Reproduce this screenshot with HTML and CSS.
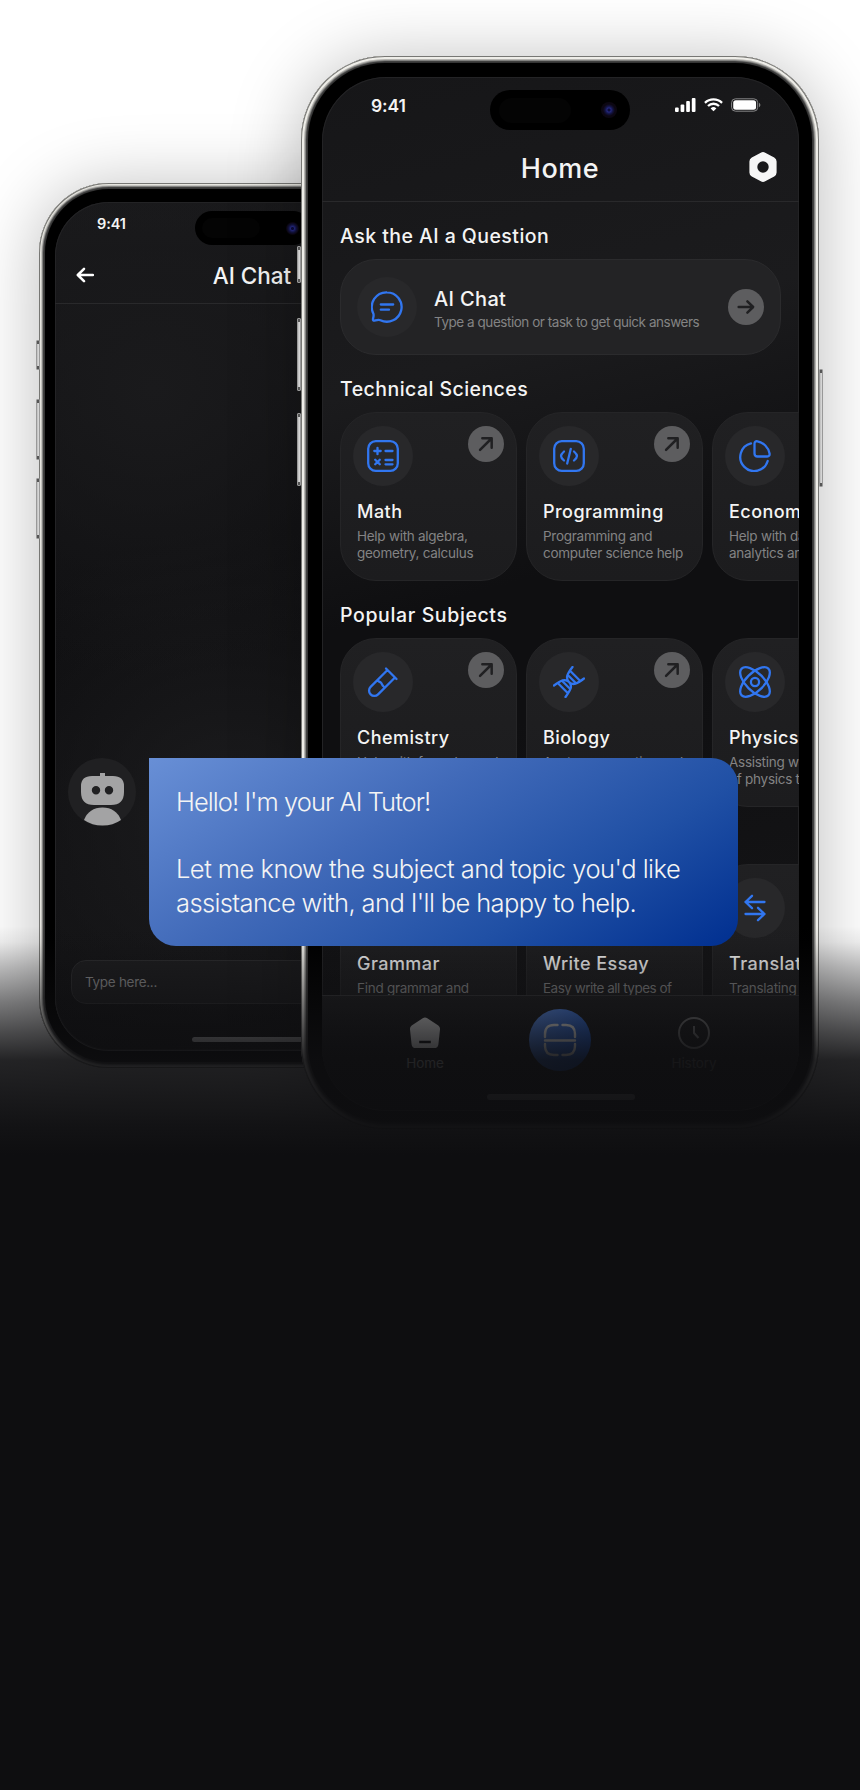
FILE: index.html
```html
<!DOCTYPE html>
<html lang="en">
<head>
<meta charset="utf-8">
<title>AI Tutor</title>
<link rel="stylesheet" href="styles.css">
</head>
<body>
<svg class="defs" width="0" height="0">
  <defs>
    <linearGradient id="pent" x1="0" y1="0" x2="0" y2="1"><stop offset="0" stop-color="#e0e0e0"/><stop offset="1" stop-color="#fff"/></linearGradient>
  </defs>
  <symbol id="i-arrow" viewBox="0 0 24 24"><path d="M4 12h15M13.500 5.800 19.800 12l-6.300 6.200"/></symbol>
  <symbol id="i-diag" viewBox="0 0 24 24"><path d="M5.500 18.500 18 6M8 5.800h10.200V16"/></symbol>
  <symbol id="i-chat" viewBox="0 0 32 32"><path d="M16 1.300a14.700 14.700 0 1 1-6.600 27.900c-1.700-.8-3-.4-5 .2-2.100.6-2.800 0-2.300-2.100.5-2 .9-3.200.2-4.900A14.700 14.700 0 0 1 16 1.300zM9.800 13.500h12.400M9.800 18.700h8.200"/></symbol>
  <symbol id="i-math" viewBox="0 0 32 32"><rect x="1.200" y="1.200" width="29.600" height="29.600" rx="7.500"/><path d="M7.300 11h6.400M10.500 7.800v6.400M18.500 11h7M8.200 19.700l4.600 4.600M12.800 19.700l-4.600 4.600M18.500 20h7M18.500 24.300h7"/></symbol>
  <symbol id="i-code" viewBox="0 0 32 32"><rect x="1.200" y="1.200" width="29.600" height="29.600" rx="7.500"/><path d="M11 11.500c-4 3.500-4 5.500 0 9M21 11.500c4 3.500 4 5.500 0 9M17.800 8.800 14.200 23.500"/></symbol>
  <symbol id="i-pie" viewBox="0 0 32 32"><path d="M12 3.400A14 14 0 1 0 28.700 21M15.500 3.700c0-2 1.200-2.700 3-2.400 6 1.200 10.800 6 12 12 .4 2-.4 3.200-2.400 3.200H18.500c-2 0-3-1-3-3z"/></symbol>
  <symbol id="i-tube" viewBox="0 0 32 32"><path d="M19 2.500 29.500 13M20.500 4 3.600 20.900a5.100 5.100 0 0 0 7.500 7.500L28 11.500M10.500 14.200c1.200 1.700 2.400 1.500 3.500 2.600s.9 2.300 2.500 3.500"/></symbol>
  <symbol id="i-dna" viewBox="0 0 32 32"><path d="M1 19.500C8 14.500 12 12 16 16s8.500 1.500 15-3.500M12.500 31C17.500 24 20 20 16 16S14.500 7.500 19.500 1M5.500 17.800l8.700 8.700M10 15.800l6.200 6.200M17.800 5.500l8.700 8.700M15.800 10l6.200 6.200"/></symbol>
  <symbol id="i-atom" viewBox="0 0 32 32"><circle cx="16" cy="16" r="4.100"/><ellipse cx="16" cy="16" rx="18.900" ry="9" transform="rotate(45 16 16)"/><ellipse cx="16" cy="16" rx="18.900" ry="9" transform="rotate(-45 16 16)"/></symbol>
  <symbol id="i-swap" viewBox="0 0 32 32"><path d="M25.500 10H6.500M13 3.800 6.500 10l6.500 6.200M6.500 22h19M19 15.800l6.500 6.200-6.500 6.200"/></symbol>
</svg>

<main class="stage">
  <section class="phone phone--back">
    <i class="key key--a"></i><i class="key key--b"></i><i class="key key--c"></i>
    <div class="bezel">
      <div class="screen">
        <header class="top">
          <div class="status"><span class="time">9:41</span></div>
          <div class="bar">
            <svg class="back-arrow" viewBox="0 0 18 16"><path d="M17 8H2M8 1.800 1.800 8 8 14.200"/></svg>
            <h1>AI Chat</h1>
          </div>
        </header>
        <div class="composer">Type here...</div>
        <div class="home-line"></div>
      </div>
      <div class="island"><i class="sensor"></i><i class="lens"></i></div>
    </div>
  </section>

  <section class="phone phone--front">
    <i class="key key--a"></i><i class="key key--b"></i><i class="key key--c"></i><i class="key key--power"></i>
    <div class="bezel">
      <div class="screen">
        <header class="top">
          <div class="status">
            <span class="time">9:41</span>
            <span class="signals">
              <svg width="21" height="14" viewBox="0 0 21 14" fill="#fff"><rect x="0" y="9.500" width="3.700" height="4.500" rx="1"/><rect x="5.600" y="6.500" width="3.700" height="7.500" rx="1"/><rect x="11.200" y="3" width="3.700" height="11" rx="1"/><rect x="16.800" y="0" width="3.700" height="14" rx="1"/></svg>
              <svg width="19" height="14" viewBox="0 0 20 14" fill="none" stroke="#fff" stroke-width="2.400"><path d="M1 4.700a13 13 0 0 1 18 0M4.200 8a8.400 8.400 0 0 1 11.600 0"/><path d="M7 10.600a4.300 4.300 0 0 1 6 0l-3 3.100z" fill="#fff" stroke="none"/></svg>
              <svg width="30" height="14" viewBox="0 0 31 14"><rect x=".6" y=".6" width="27" height="12.800" rx="4" fill="none" stroke="#8a8a8b" stroke-width="1"/><rect x="2.300" y="2.200" width="23.600" height="9.600" rx="2.600" fill="#fff"/><path d="M29 4.800c1.800.8 1.800 3.600 0 4.400z" fill="#8a8a8b"/></svg>
            </span>
          </div>
          <div class="bar">
            <h1>Home</h1>
            <svg class="nut" viewBox="0 0 28 30"><path fill="#f6f6f6" fill-rule="evenodd" d="M11.800.7a4.500 4.500 0 0 1 4.400 0l9 4.800A4.500 4.500 0 0 1 27.600 9.500v11a4.500 4.500 0 0 1-2.400 4l-9 4.800a4.500 4.500 0 0 1-4.400 0l-9-4.800a4.500 4.500 0 0 1-2.400-4v-11a4.500 4.500 0 0 1 2.400-4zM14 9.300a5.700 5.700 0 1 0 0 11.400 5.700 5.700 0 0 0 0-11.400z"/></svg>
          </div>
        </header>
        <div class="feed">
          <h2>Ask the AI a Question</h2>
          <article class="card card--wide">
            <span class="disc"><svg><use href="#i-chat"/></svg></span>
            <div class="copy"><h3>AI Chat</h3><p>Type a question or task to get quick answers</p></div>
            <span class="go"><svg><use href="#i-arrow"/></svg></span>
          </article>
          <h2>Technical Sciences</h2>
          <div class="row">
            <article class="card"><div class="head"><span class="disc"><svg><use href="#i-math"/></svg></span><span class="go"><svg><use href="#i-diag"/></svg></span></div><h3>Math</h3><p>Help with algebra,<br>geometry, calculus</p></article>
            <article class="card"><div class="head"><span class="disc"><svg><use href="#i-code"/></svg></span><span class="go"><svg><use href="#i-diag"/></svg></span></div><h3>Programming</h3><p>Programming and<br>computer science help</p></article>
            <article class="card"><div class="head"><span class="disc"><svg><use href="#i-pie"/></svg></span></div><h3>Economics</h3><p>Help with data<br>analytics and</p></article>
          </div>
          <h2 class="popular">Popular Subjects</h2>
          <div class="row">
            <article class="card"><div class="head"><span class="disc"><svg><use href="#i-tube"/></svg></span><span class="go"><svg><use href="#i-diag"/></svg></span></div><h3>Chemistry</h3><p>Help with formulas and</p></article>
            <article class="card"><div class="head"><span class="disc"><svg><use href="#i-dna"/></svg></span><span class="go"><svg><use href="#i-diag"/></svg></span></div><h3>Biology</h3><p>Anatomy, genetics and</p></article>
            <article class="card"><div class="head"><span class="disc"><svg><use href="#i-atom"/></svg></span></div><h3>Physics</h3><p>Assisting with<br>of physics tasks</p></article>
          </div>
          <h2>&nbsp;</h2>
          <div class="row">
            <article class="card"><div class="head"><span class="disc"></span></div><h3>Grammar</h3><p>Find grammar and</p></article>
            <article class="card"><div class="head"><span class="disc"></span></div><h3>Write Essay</h3><p class="essay">Easy write all types of</p></article>
            <article class="card"><div class="head"><span class="disc"><svg><use href="#i-swap"/></svg></span></div><h3>Translator</h3><p>Translating any</p></article>
          </div>
        </div>
        <nav class="tabs">
          <div class="tab-row">
            <div class="tab">
              <svg viewBox="0 0 32 32"><path fill="url(#pent)" d="M13.700 1.300a4 4 0 0 1 4.600 0l11 7.300a4 4 0 0 1 1.700 3.800l-1.600 15a4.200 4.200 0 0 1-4.200 3.700H6.800a4.200 4.200 0 0 1-4.200-3.700l-1.600-15a4 4 0 0 1 1.700-3.800z"/><path d="M10.200 25h11.600" stroke="#141416" stroke-width="2.600"/></svg>
              <span>Home</span>
            </div>
            <div class="scan"><svg viewBox="0 0 34 34"><path d="M14.500 2H11Q2 2 2 11v3M19.500 2H23q9 0 9 9v3M2 21v2q0 9 9 9h3.500M32 21v2q0 9-9 9h-3.500M2 17.500h30"/></svg></div>
            <div class="tab tab--dim">
              <svg viewBox="0 0 32 32" fill="none" stroke="#fff" stroke-width="2"><circle cx="16" cy="16" r="15"/><path d="M16 9v7l4.500 5"/></svg>
              <span>History</span>
            </div>
          </div>
          <div class="home-line"></div>
        </nav>
      </div>
      <div class="island"><i class="sensor"></i><i class="lens"></i></div>
    </div>
  </section>

  <div class="fade"></div>

  <div class="message">
    <svg class="bot" viewBox="0 0 68 68"><circle cx="34" cy="34" r="34" fill="#202022"/><path fill="#a3a3a4" fill-rule="evenodd" d="M32 15h5v3h8q11 0 11 10v6q0 13-13 13H26q-13 0-13-13v-6q0-10 11-10h8zM28 28a4.200 4.200 0 1 0 0 8.400 4.200 4.200 0 0 0 0-8.400zM41 28a4.200 4.200 0 1 0 0 8.400 4.200 4.200 0 0 0 0-8.400z"/><path fill="#a3a3a4" d="M16 62q5-12.500 18.500-12.500T53 62q-8 5.500-18.500 5.500T16 62z"/></svg>
    <div class="bubble"><p class="l1">Hello! I'm your AI Tutor!</p><p class="l2">Let me know the subject and topic you'd like</p><p class="l3">assistance with, and I'll be happy to help.</p></div>
  </div>
</main>
</body>
</html>
```
FILE: styles.css
```css
* { box-sizing: border-box; }
body { margin: 0; background: #fff; font-family: Inter, "Liberation Sans", sans-serif; color: #f4f4f4; }
h1, h2, h3, p { margin: 0; font-weight: 500; white-space: nowrap; }
svg { display: block; }
.defs { position: absolute; }
.stage { position: relative; width: 860px; height: 1790px; overflow: hidden; background: #fff; }

/* Device frames overlap freely on the stage */
.phone { position: absolute; background: #222; }
.phone--front { left: 301px; top: 56px; width: 518px; height: 1073px; border-radius: 84px; padding: 7px;
  box-shadow: inset 0 0 0 1px #777774, inset 0 0 0 3px #eeede8, inset 0 0 0 4px #b5b4b0, inset 0 0 1px 5px #8a8a88, inset 0 0 2px 7px #3c3c3c, 0 5px 70px rgba(0,0,0,.27); }
.phone--back { left: 39px; top: 183px; width: 428px; height: 885px; border-radius: 70px; padding: 6px;
  box-shadow: inset 0 0 0 1px #777774, inset 0 0 0 2px #e6e5df, inset 0 0 0 3px #c4c3bf, inset 0 0 1px 4px #8a8a88, inset 0 0 2px 6px #3c3c3c, 0 5px 70px rgba(0,0,0,.27); }
.bezel { position: relative; height: 100%; background: #000; }
.phone--front .bezel { border-radius: 77px; padding: 14px 14px 11px; }
.phone--back .bezel { border-radius: 64px; padding: 13px 11px 11px 10px; }
.screen { display: flex; flex-direction: column; height: 100%; overflow: hidden; border-bottom: 1px solid #4a4a4c; }
.phone--front .screen { width: 477px; border-radius: 64px; background: linear-gradient(165deg, #161618 0, #1b1b1d 28%, #0f0f11 48%, #0f0f11 60%, #141416 85%); box-shadow: inset 0 0 0 1px #232325; }
.phone--back .screen { border-radius: 54px; background: radial-gradient(circle at 25% 22%, #1a1a1c, transparent 40%), radial-gradient(circle at 45% 73%, #1c1c1e, transparent 45%), linear-gradient(#19191b, #111113 30%, #0e0e10 60%, #121214); box-shadow: inset 0 0 0 1px #232325; }

.key { position: absolute; width: 4px; background: linear-gradient(#555 0 3px, transparent 3px calc(100% - 3px), #555 calc(100% - 3px)), linear-gradient(90deg, #999, #f0f0f0 50%, #bbb); border: 1px solid #999; border-radius: 1px; }
.phone--front .key { left: -4px; }
.phone--front .key--a { top: 190px; height: 37px; }
.phone--front .key--b { top: 262px; height: 73px; }
.phone--front .key--c { top: 357px; height: 73px; }
.phone--front .key--power { left: auto; right: -4px; top: 313px; height: 118px; }
.phone--back .key { left: -3px; }
.phone--back .key--a { top: 157px; height: 30px; }
.phone--back .key--b { top: 216px; height: 61px; }
.phone--back .key--c { top: 295px; height: 61px; }

.island { position: absolute; background: #000; display: flex; align-items: center; justify-content: space-between; }
.phone--front .island { left: 182px; top: 27px; width: 140px; height: 40px; border-radius: 20px; padding: 0 13px 0 9px; }
.phone--back .island { left: 150px; top: 22px; width: 115px; height: 34px; border-radius: 17px; padding: 0 11px 0 7px; }
.sensor { width: 72px; height: 25px; border-radius: 13px; background: #040404; }
.phone--back .sensor { width: 58px; height: 20px; }
.lens { width: 16px; height: 16px; border-radius: 50%; background: radial-gradient(circle, #0c0c3c 0 1px, #24287e 2px, #12123e 4px, #0c0712 6px); }
.phone--back .lens { width: 13px; height: 13px; }

.top { border-bottom: 1px solid #29292b; flex: none; }
.status { display: flex; align-items: center; justify-content: space-between; }
.bar { display: flex; align-items: center; justify-content: center; position: relative; }
.phone--front .top { height: 125px; }
.phone--front .status { height: 56px; padding: 0 38px 0 49px; }
.phone--front .time { font-size: 17.500px; font-weight: 600; letter-spacing: -.1px; }
.signals { display: flex; gap: 8px; }
.phone--front .bar { height: 69px; }
.phone--front h1 { font-size: 27px; letter-spacing: .5px; padding-top: 1px; margin-right: 1px; }
.nut { position: absolute; right: 22px; top: 19px; width: 28px; height: 30px; }
.phone--back .top { height: 102px; }
.phone--back .status { height: 43px; padding-left: 42px; }
.phone--back .time { font-size: 14.500px; font-weight: 600; letter-spacing: -.1px; }
.phone--back .bar { height: 58px; padding-top: 3px; }
.phone--back h1 { font-size: 22.500px; margin-right: 1px; }
.back-arrow { position: absolute; left: 21px; top: 22px; width: 18px; height: 16px; fill: none; stroke: #fff; stroke-width: 2.500; stroke-linecap: round; stroke-linejoin: round; }

.feed { flex: 1; min-height: 0; overflow: hidden; padding: 0 0 0 18px; }
h2 { margin: 22px 0 11px; height: 24px; line-height: 24px; font-size: 19.500px; letter-spacing: .45px; }
.popular { letter-spacing: .62px; }
.row { display: flex; gap: 9px; width: 560px; }
.card { flex: none; width: 177px; height: 169px; padding: 12.500px 12px; border: 1px solid #252527; border-radius: 36px; background: linear-gradient(#202022, #1c1c1e); }
.card--wide { display: flex; align-items: center; width: 441px; height: 96px; padding: 0 16px; background: #232325; border-color: #2b2b2d; }
.head { display: flex; justify-content: space-between; }
.disc { display: flex; width: 60px; height: 60px; border-radius: 50%; background: #28282a; align-items: center; justify-content: center; }
.disc svg { width: 32px; height: 32px; overflow: visible; fill: none; stroke: #3176f0; stroke-width: 2.300; stroke-linecap: round; stroke-linejoin: round; }
.go { display: flex; width: 36px; height: 36px; border-radius: 50%; background: #5d5d5f; align-items: center; justify-content: center; }
.go svg { width: 22px; height: 22px; fill: none; stroke: #202022; stroke-width: 2.700; stroke-linecap: round; stroke-linejoin: round; }
.copy { flex: 1; padding-left: 17px; }
h3 { font-size: 18px; line-height: 24px; letter-spacing: .45px; }
.card p { font-size: 13.500px; line-height: 17px; font-weight: 400; letter-spacing: -.27px; color: #838384; }
.card .essay { letter-spacing: -.5px; }
.card > h3 { margin: 14px 0 4px; padding-left: 4px; }
.card > p { padding-left: 4px; }
.copy h3 { font-size: 20px; margin: 4px 0 3px; letter-spacing: .35px; }
.card .copy p { letter-spacing: -.46px; }

.tabs { flex: none; height: 115px; border-top: 1px solid #343436; background: linear-gradient(#1f1f21, #131315); }
.tab-row { display: flex; height: 98px; padding: 13px 60px 0 58px; justify-content: space-between; }
.tab { display: flex; flex-direction: column; align-items: center; width: 90px; padding-top: 8px; font-size: 13.500px; line-height: 18px; letter-spacing: -.1px; }
.tab svg { width: 32px; height: 32px; margin-bottom: 5px; }
.tab--dim { opacity: .4; }
.scan { display: flex; width: 62px; height: 62px; border-radius: 50%; align-items: center; justify-content: center; background: linear-gradient(135deg, #6a9bf6, #0c4dcb); }
.scan svg { width: 34px; height: 34px; fill: none; stroke: #fff; stroke-width: 2.400; stroke-linecap: round; }
.home-line { width: 148px; height: 6px; border-radius: 3px; margin: 0 auto; background: #b0b0b2; }

.composer { margin: auto 16px 33px; height: 44px; border: 1px solid #2c2c2e; border-radius: 15px; background: #1d1d1f; padding-left: 13px; font-size: 13.500px; line-height: 43px; letter-spacing: -.3px; color: #8b8b8c; flex: none; }
.phone--back .home-line { flex: none; width: 122px; height: 5px; margin: 0 auto 8px; }

.fade { position: absolute; left: 0; right: 0; top: 860px; height: 930px;
  background: linear-gradient(rgba(14,14,16,0) 0, rgba(14,14,16,0) 66px, rgba(14,14,16,.06) 82px, rgba(14,14,16,.27) 107px, rgba(14,14,16,.54) 142px, rgba(14,14,16,.74) 172px, rgba(14,14,16,.91) 200px, rgba(14,14,16,.95) 235px, rgba(14,14,16,.98) 265px, #0e0e10 295px); }

/* The greeting floats over both devices */
.message { position: absolute; left: 68px; top: 758px; display: flex; gap: 13px; }
.bot { width: 68px; height: 68px; }
.bubble { width: 589px; height: 188px; padding: 27px 27px; border-radius: 0 27px 27px 27px; background: linear-gradient(148deg, #688fd6 0, #416ab9 38%, #2050a5 70%, #002f90 100%); font-size: 25.500px; line-height: 33.500px; }
.bubble p { font-weight: 300; height: 33.500px; }
.bubble .l1 { margin-bottom: 33.500px; letter-spacing: -.95px; }
.bubble .l2 { letter-spacing: -.52px; }
.bubble .l3 { letter-spacing: -.62px; }
```
